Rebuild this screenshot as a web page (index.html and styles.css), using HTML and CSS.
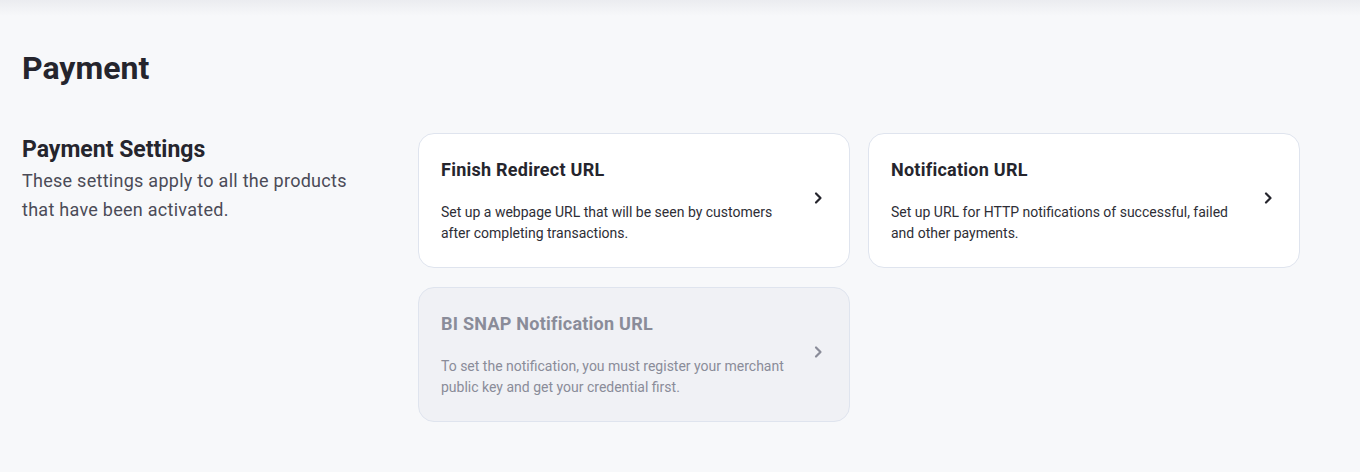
FILE: index.html
```html
<!DOCTYPE html>
<html>
<head>
<meta charset="utf-8">
<link rel="stylesheet" href="styles.css">
</head>
<body>
<div class="topshade"></div>
<main class="page">
  <h1 class="page-title">Payment</h1>
  <section class="settings">
    <div class="intro">
      <h2 class="intro-title">Payment Settings</h2>
      <p class="intro-text">These settings apply to all the products that have been activated.</p>
    </div>
    <div class="cards">
      <a class="card">
        <div class="card-body">
          <div class="card-title">Finish Redirect URL</div>
          <div class="card-text">Set up a webpage URL that will be seen by customers after completing transactions.</div>
        </div>
        <svg class="chev" width="10" height="14" viewBox="0 0 10 14"><path d="M3 2.5 L7.5 7 L3 11.5" fill="none" stroke="currentColor" stroke-width="2.2" stroke-linecap="round" stroke-linejoin="round"/></svg>
      </a>
      <a class="card">
        <div class="card-body">
          <div class="card-title">Notification URL</div>
          <div class="card-text">Set up URL for HTTP notifications of successful, failed and other payments.</div>
        </div>
        <svg class="chev" width="10" height="14" viewBox="0 0 10 14"><path d="M3 2.5 L7.5 7 L3 11.5" fill="none" stroke="currentColor" stroke-width="2.2" stroke-linecap="round" stroke-linejoin="round"/></svg>
      </a>
      <a class="card disabled">
        <div class="card-body">
          <div class="card-title">BI SNAP Notification URL</div>
          <div class="card-text">To set the notification, you must register your merchant public key and get your credential first.</div>
        </div>
        <svg class="chev" width="10" height="14" viewBox="0 0 10 14"><path d="M3 2.5 L7.5 7 L3 11.5" fill="none" stroke="currentColor" stroke-width="2.2" stroke-linecap="round" stroke-linejoin="round"/></svg>
      </a>
    </div>
  </section>
</main>
</body>
</html>
```

FILE: styles.css
```css
html, body {
  margin: 0;
  padding: 0;
  background: #f7f8fa;
  font-family: Roboto, "Liberation Sans", sans-serif;
  color: #25252d;
}
.topshade {
  height: 16px;
  background: linear-gradient(#ebecf0, #f7f8fa);
}
.page {
  padding: 30px 22px 40px 22px;
}
.page-title {
  margin: 0;
  font-size: 32px;
  font-weight: 700;
  line-height: 44px;
  color: #25252d;
}
.settings {
  display: grid;
  grid-template-columns: 396px 882px;
  margin-top: 43px;
}
.intro-title {
  margin: 2px 0 0 0;
  font-size: 23px;
  font-weight: 700;
  line-height: 30px;
  color: #25252d;
}
.intro-text {
  margin: 1px 0 0 0;
  font-size: 18px;
  letter-spacing: 0.27px;
  line-height: 29px;
  color: #4b4b57;
  width: 340px;
}
.cards {
  display: grid;
  grid-template-columns: 432px 432px;
  column-gap: 18px;
  row-gap: 19px;
}
.card {
  display: flex;
  align-items: center;
  background: #ffffff;
  border: 1px solid #dfe4ee;
  border-radius: 16px;
  height: 135px;
  box-sizing: border-box;
  padding: 0 26px 0 22px;
}
.card-body {
  flex: 1;
  padding-right: 20px;
}
.card-title {
  font-size: 18px;
  letter-spacing: 0.25px;
  font-weight: 700;
  line-height: 24px;
  color: #25252d;
}
.card-text {
  margin-top: 20px;
  font-size: 14px;
  line-height: 21px;
  color: #2e2e36;
}
.chev {
  color: #25252d;
  flex: none;
  margin-bottom: 6px;
}
.card.disabled {
  background: #f0f1f5;
}
.card.disabled .card-title,
.card.disabled .card-text {
  color: #8a8c99;
}
.card.disabled .chev {
  color: #8a8c99;
}
```
